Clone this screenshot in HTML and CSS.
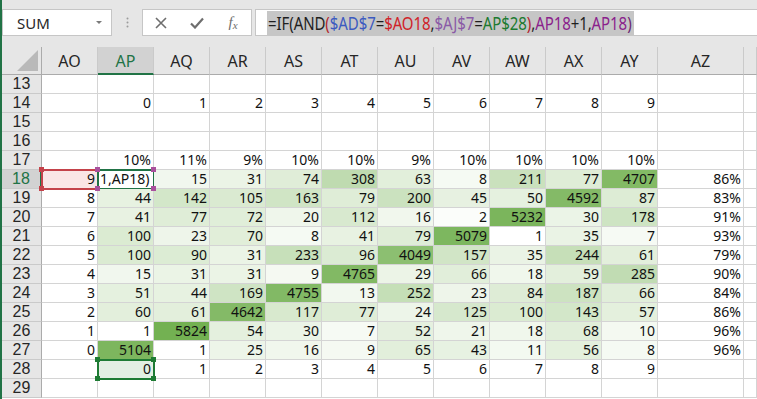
FILE: index.html
```html
<!DOCTYPE html>
<html lang="en">
<head>
  <meta charset="UTF-8">
  <title>Sheet</title>
  <link rel="stylesheet" href="styles.css">
</head>
<body>
  <div class="app">
    <!-- Formula bar -->
    <div class="bar">
      <div class="namebox"><span>SUM</span><span class="caret"></span></div>
      <div class="grip">
        <svg width="3" height="11" viewBox="0 0 3 11"><circle cx="1.5" cy="1.5" r="1" fill="#9c9c9c"/><circle cx="1.5" cy="5.5" r="1" fill="#9c9c9c"/><circle cx="1.5" cy="9.5" r="1" fill="#9c9c9c"/></svg>
      </div>
      <div class="fxbox">
        <span class="btn">
          <svg width="12" height="12" viewBox="0 0 12 12"><path d="M1 1 L11 11 M11 1 L1 11" stroke="#6e6e6e" stroke-width="1.6"/></svg>
        </span>
        <span class="btn">
          <svg width="14" height="12" viewBox="0 0 14 12"><path d="M1 6.5 L5 10.5 L13 1.5" stroke="#6e6e6e" stroke-width="2.2" fill="none"/></svg>
        </span>
        <span class="btn fx"><i>f</i><i class="x">x</i></span>
      </div>
      <div class="formula">
        <span class="expr">=IF(AND<span class="c-paren">(</span><span class="c-blue">$AD$7</span>=<span class="c-red">$AO18</span>,<span class="c-purple">$AJ$7</span>=<span class="c-green">AP$28</span><span class="c-paren">)</span>,<span class="c-mag">AP18</span>+1,<span class="c-mag">AP18</span><span class="c-end">)</span></span>
      </div>
    </div>

    <!-- Grid -->
    <div class="sheet" id="sheet"></div>
  </div>

  <script>
    const sheet = document.getElementById('sheet');
    const cols = ['AO', 'AP', 'AQ', 'AR', 'AS', 'AT', 'AU', 'AV', 'AW', 'AX', 'AY', 'AZ', ''];

    const data = {
      14: ['', 0, 1, 2, 3, 4, 5, 6, 7, 8, 9, ''],
      17: ['', '10%', '11%', '9%', '10%', '10%', '9%', '10%', '10%', '10%', '10%', ''],
      18: [9, null, 15, 31, 74, 308, 63, 8, 211, 77, 4707, '86%'],
      19: [8, 44, 142, 105, 163, 79, 200, 45, 50, 4592, 87, '83%'],
      20: [7, 41, 77, 72, 20, 112, 16, 2, 5232, 30, 178, '91%'],
      21: [6, 100, 23, 70, 8, 41, 79, 5079, 1, 35, 7, '93%'],
      22: [5, 100, 90, 31, 233, 96, 4049, 157, 35, 244, 61, '79%'],
      23: [4, 15, 31, 31, 9, 4765, 29, 66, 18, 59, 285, '90%'],
      24: [3, 51, 44, 169, 4755, 13, 252, 23, 84, 187, 66, '84%'],
      25: [2, 60, 61, 4642, 117, 77, 24, 125, 100, 143, 57, '86%'],
      26: [1, 1, 5824, 54, 30, 7, 52, 21, 18, 68, 10, '96%'],
      27: [0, 5104, 1, 25, 16, 9, 65, 43, 11, 56, 8, '96%'],
      28: ['', 0, 1, 2, 3, 4, 5, 6, 7, 8, 9, '']
    };

    // white -> green colour scale
    function heat(v) {
      let t;
      if (v >= 1000) {
        t = 0.9 + (v - 4000) / 1800 * 0.2;
      } else {
        t = 0.5 * Math.sqrt(Math.max(v - 1, 0) / 300);
      }
      t = Math.min(t, 1.12);
      const dark = [128, 184, 98];
      const c = dark.map(d => Math.round(255 - (255 - d) * t));
      return `rgb(${c[0]}, ${c[1]}, ${c[2]})`;
    }

    function addHandles(el, color, corners) {
      corners.forEach(pos => {
        const h = document.createElement('span');
        h.className = `handle ${pos} ${color}`;
        el.appendChild(h);
      });
    }

    // header row
    const corner = document.createElement('div');
    corner.className = 'corner';
    corner.innerHTML = '<svg width="21" height="21" viewBox="0 0 21 21"><path d="M21 0 L21 21 L0 21 Z" fill="#b9b9b9"/></svg>';
    sheet.appendChild(corner);

    cols.forEach(name => {
      const h = document.createElement('div');
      h.className = name === 'AP' ? 'colhead hl' : 'colhead';
      h.textContent = name;
      sheet.appendChild(h);
    });

    for (let r = 13; r <= 29; r++) {
      const label = document.createElement('div');
      label.className = 'rowhead';
      if (r === 18) label.classList.add('hl');
      label.textContent = r;
      sheet.appendChild(label);

      const values = data[r] || [];
      for (let c = 0; c < cols.length; c++) {
        const cell = document.createElement('div');
        cell.className = 'cell';
        const v = values[c];
        if (v !== undefined && v !== null) cell.textContent = v;

        if (r >= 18 && r <= 27 && c >= 1 && c <= 10 && typeof v === 'number') {
          cell.style.background = heat(v);
        }

        if (r === 18 && c === 0) {
          cell.classList.add('ref-red');
          addHandles(cell, 'red', ['tl', 'bl']);
        }
        if (r === 18 && c === 1) {
          cell.classList.add('active');
          cell.textContent = '1,AP18)';
          addHandles(cell, 'purple', ['tl', 'tr', 'bl', 'br']);
        }
        if (r === 28 && c === 1) {
          cell.classList.add('ref-green');
          addHandles(cell, 'green', ['tl', 'tr', 'bl', 'br']);
        }
        sheet.appendChild(cell);
      }
    }
  </script>
</body>
</html>
```

FILE: styles.css
```css
body {
  margin: 0;
  font-family: "Noto Sans", "Open Sans", sans-serif;
  background-color: #fff;
  color: #1f1f1f;
}

.app {
  border-left: 2px solid #217346;
  height: 399px;
  overflow: hidden;
}

/* Formula bar */
.bar {
  height: 47px;
  box-sizing: border-box;
  padding-top: 9px;
  background-color: #e6e6e6;
  display: flex;
  align-items: flex-start;
}

.namebox {
  width: 110px;
  height: 27px;
  box-sizing: border-box;
  background-color: #fff;
  border: 1px solid #c6c6c6;
  display: flex;
  align-items: center;
  justify-content: space-between;
  padding: 0 9px 0 14px;
  font-size: 15px;
  color: #262626;
}

.caret {
  border-left: 3px solid transparent;
  border-right: 3px solid transparent;
  border-top: 3px solid #7a7a7a;
}

.grip {
  width: 30px;
  height: 27px;
  display: flex;
  align-items: center;
  justify-content: center;
}

.fxbox {
  width: 110px;
  height: 27px;
  box-sizing: border-box;
  background-color: #fff;
  border: 1px solid #c6c6c6;
  display: flex;
}

.fxbox .btn {
  width: 36px;
  display: flex;
  align-items: center;
  justify-content: center;
}

.fx {
  font-family: "Liberation Serif", serif;
  font-size: 15px;
  color: #6e6e6e;
}

.fx .x {
  font-size: 11px;
  margin-top: 4px;
}

.formula {
  flex: 1;
  height: 27px;
  margin-left: 3px;
  box-sizing: border-box;
  background-color: #fff;
  border: 1px solid #c6c6c6;
  border-right: none;
  padding-left: 11px;
  display: flex;
  align-items: center;
}

.expr {
  display: inline-block;
  height: 20px;
  line-height: 20px;
  padding: 0 2px 0 1px;
  font-size: 15px;
  letter-spacing: -0.08px;
  white-space: nowrap;
  background-color: #c6c6c6;
  transform: scaleY(1.2);
}

.c-paren { color: #b3272d; }
.c-blue { color: #3c5ac0; }
.c-red { color: #d0232a; }
.c-purple { color: #8a5aa6; }
.c-green { color: #1c7a30; }
.c-mag { color: #8b1f8c; }
.c-end { color: #6a2a74; }

/* Sheet grid */
.sheet {
  display: grid;
  grid-template-columns: 40px repeat(11, 56px) 86px 1fr;
  grid-template-rows: 28px;
  grid-auto-rows: 19px;
}

.corner {
  background-color: #e6e6e6;
  border-right: 1px solid #ababab;
  border-bottom: 1px solid #ababab;
  display: flex;
  align-items: flex-end;
  justify-content: flex-end;
  padding: 0 3px 3px 0;
}

.colhead {
  background-color: #e6e6e6;
  border-right: 1px solid #cacaca;
  border-bottom: 1px solid #ababab;
  text-align: center;
  font-size: 16px;
  line-height: 28px;
  color: #262626;
}

.colhead.hl {
  background-color: #d2d2d2;
  color: #217346;
  border-bottom: 2px solid #217346;
}

.rowhead {
  background-color: #e6e6e6;
  border-right: 1px solid #ababab;
  border-bottom: 1px solid #cacaca;
  text-align: center;
  font-family: "Liberation Sans", sans-serif;
  font-size: 16px;
  line-height: 17px;
  color: #262626;
}

.rowhead.hl {
  background-color: #d2d2d2;
  color: #217346;
  border-right: 2px solid #217346;
}

.cell {
  position: relative;
  border-right: 1px solid #d4d4d4;
  border-bottom: 1px solid #d4d4d4;
  padding-right: 2px;
  font-size: 14px;
  line-height: 18px;
  text-align: right;
  white-space: nowrap;
  color: #111;
}

/* Reference / selection boxes */
.ref-red {
  background-color: #fae6e6;
  outline: 2px solid #c4424a;
  outline-offset: -1px;
}

.active {
  background-color: #fff;
  text-align: left;
  padding-left: 2px;
  overflow: visible;
  outline: 2px solid #217346;
  outline-offset: -1px;
}

.ref-green {
  background-color: #e3efe3;
  outline: 2px solid #1e7b34;
  outline-offset: -1px;
}

.handle {
  position: absolute;
  width: 5px;
  height: 5px;
  z-index: 2;
}

.handle.tl { top: -3px; left: -3px; }
.handle.tr { top: -3px; right: -3px; }
.handle.bl { bottom: -3px; left: -3px; }
.handle.br { bottom: -3px; right: -3px; }

.handle.red { background-color: #c4424a; }
.handle.purple { background-color: #a9509c; }
.handle.green { background-color: #1e7b34; }
```
